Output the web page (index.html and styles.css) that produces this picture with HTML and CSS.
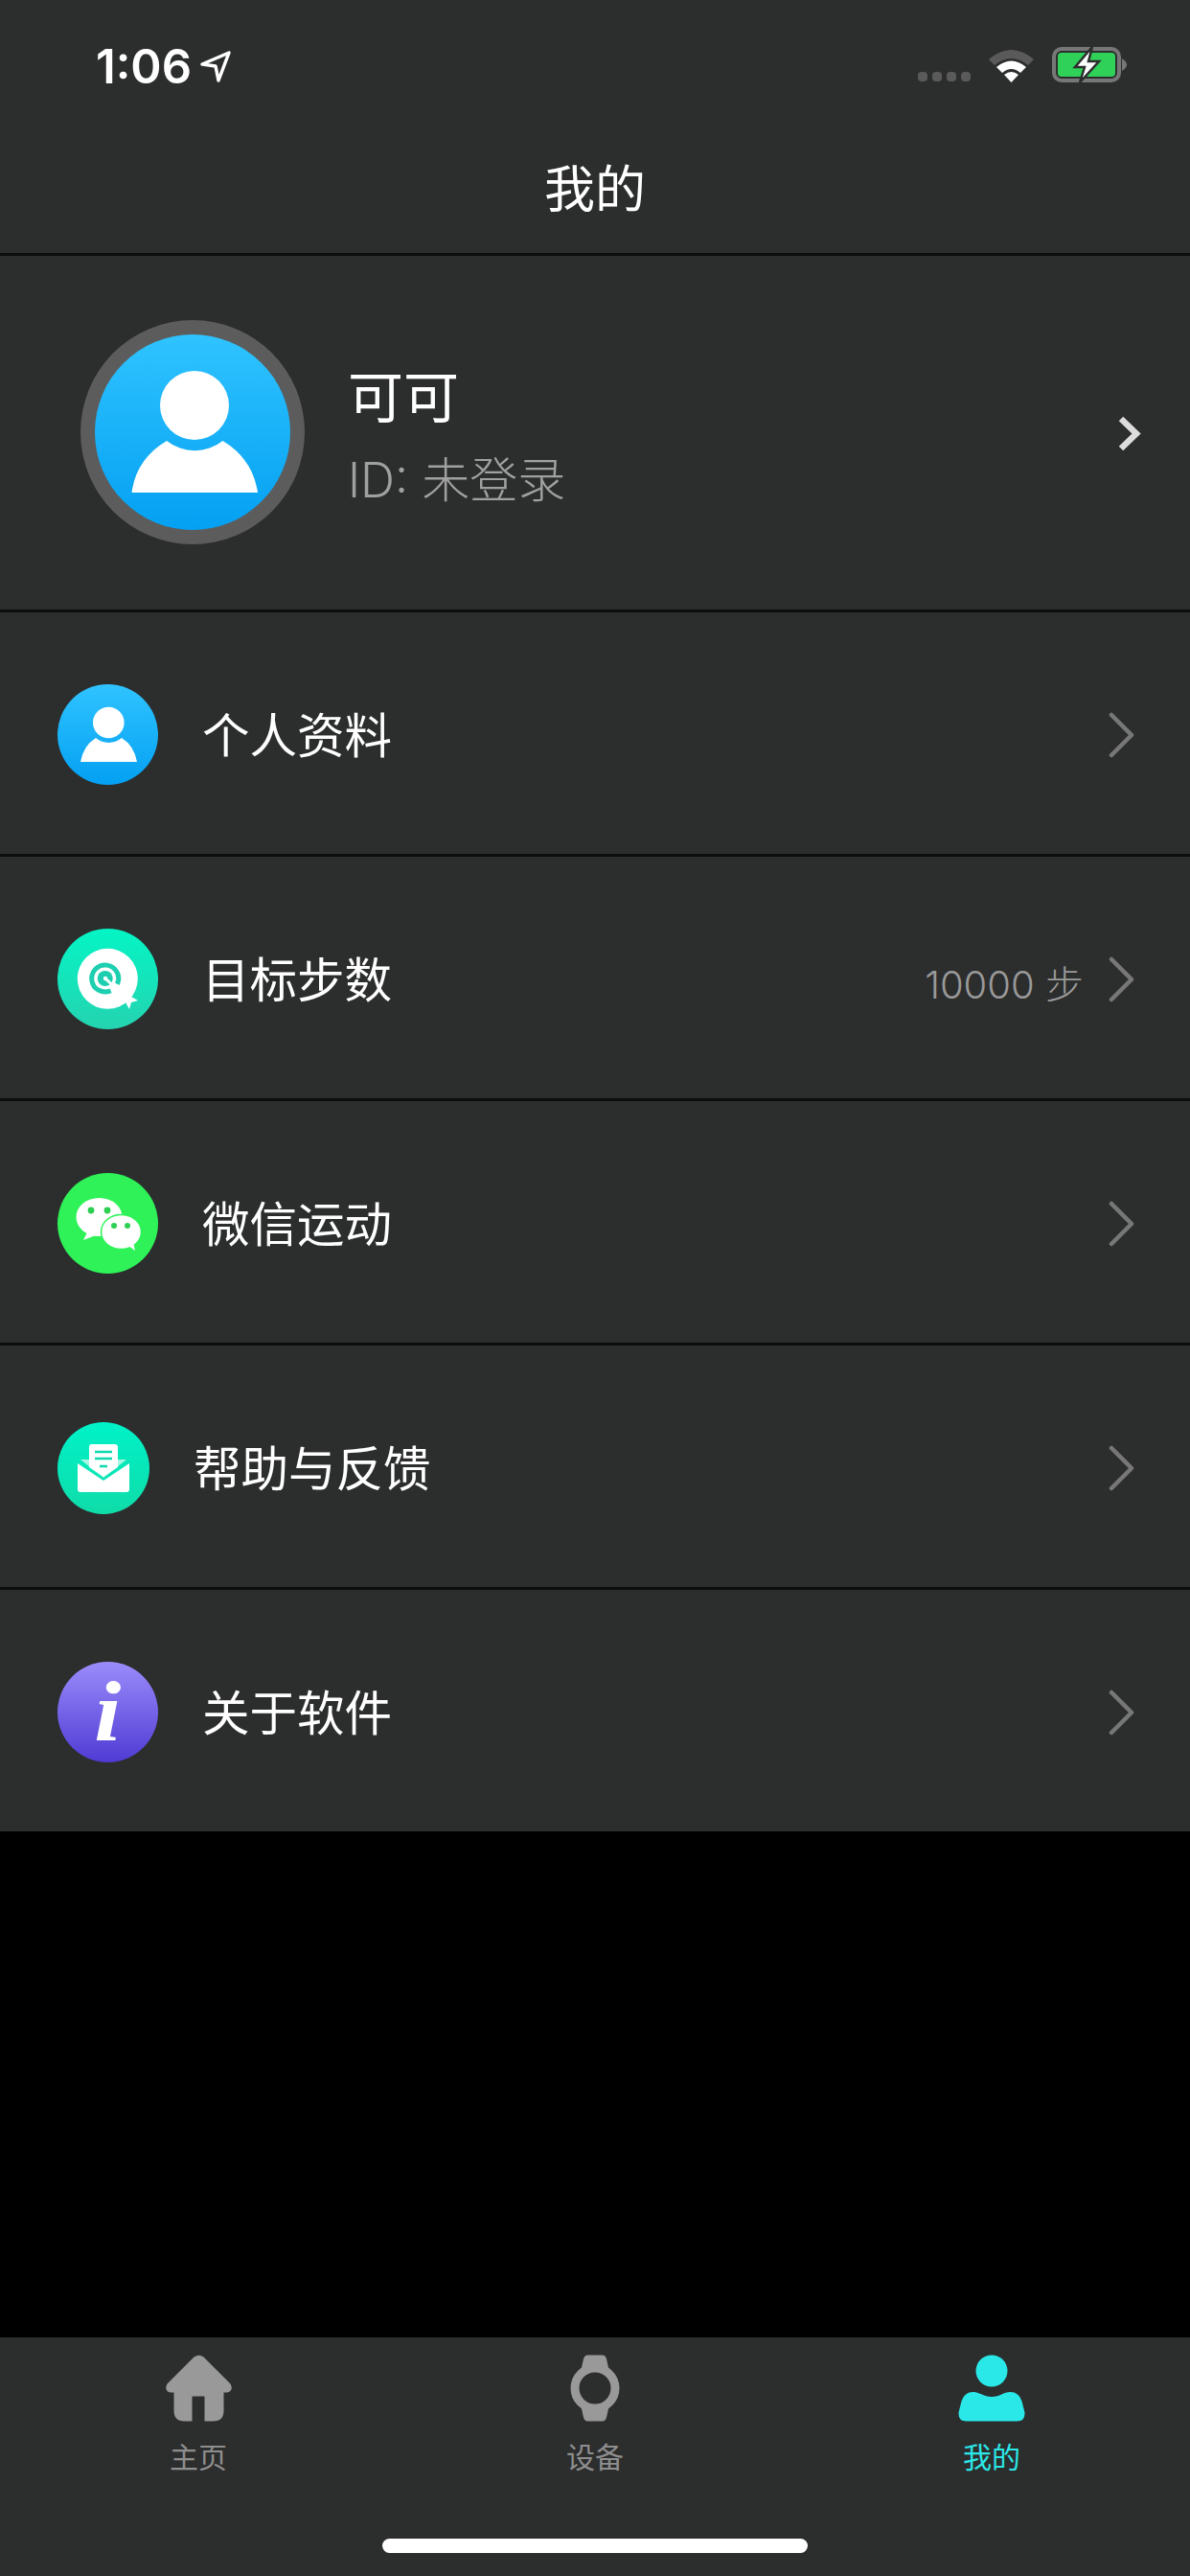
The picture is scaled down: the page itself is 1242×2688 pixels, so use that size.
FILE: index.html
```html
<!DOCTYPE html>
<html lang="zh-CN">
<head>
  <meta charset="UTF-8">
  <meta name="viewport" content="width=device-width, initial-scale=1.0">
  <title>我的</title>
  <link rel="stylesheet" href="styles.css">
</head>
<body>
  <div class="page">
    <!-- Status bar and title -->
    <div class="top">
      <div class="status">
        <div class="status-left">
          <span class="time">1:06</span>
          <svg width="32" height="33" viewBox="0 0 32 33"><path d="M2 14 L30 2 L19 31 L16 16 Z" fill="none" stroke="#fff" stroke-width="3.5" stroke-linejoin="round"/></svg>
        </div>
        <div class="status-right">
          <div class="dots"><i></i><i></i><i></i><i></i></div>
          <svg width="47" height="36" viewBox="0 0 47 36">
            <path d="M0 12 Q23.5 -8 47 12 L41 18 Q23.5 4 6 18 Z" fill="#5a5a5a"/>
            <path d="M8 20 Q23.5 7 39 20 L33 26 Q23.5 18 14 26 Z" fill="#fff"/>
            <path d="M16 28 Q23.5 22 31 28 L23.5 36 Z" fill="#fff"/>
          </svg>
          <svg width="79" height="37" viewBox="0 0 79 37">
            <rect x="2" y="2" width="68" height="33" rx="8" fill="none" stroke="#777" stroke-width="4"/>
            <rect x="6" y="6" width="60" height="25" rx="4" fill="#2fd158"/>
            <path d="M73 12 Q83 18.5 73 25 Z" fill="#777"/>
            <path d="M42 0 L24 21 H34 L29 37 L49 15 H38 Z" fill="#fff" stroke="#2c2d2d" stroke-width="2.5"/>
          </svg>
        </div>
      </div>
      <div class="title">我的</div>
    </div>

    <!-- Profile -->
    <div class="profile">
      <div class="avatar">
        <div class="avatar-inner">
          <svg width="204" height="204" viewBox="0 0 204 204">
            <circle cx="104" cy="74" r="36" fill="#fff"/>
            <path d="M38.5 165 Q43 130 75 111 A47 47 0 0 0 133.5 111 Q165 130 170 165 Z" fill="#fff"/>
          </svg>
        </div>
      </div>
      <div class="profile-text">
        <div class="profile-name">可可</div>
        <div class="profile-id">ID: 未登录</div>
      </div>
      <svg class="profile-arrow" width="27" height="39" viewBox="0 0 27 39"><path d="M5 4 L21 19.5 L5 35" fill="none" stroke="#ddd" stroke-width="6.5"/></svg>
    </div>

    <!-- Menu -->
    <div class="row">
      <div class="icon icon-blue">
        <svg width="105" height="105" viewBox="0 0 105 105">
          <circle cx="53.3" cy="40" r="16.3" fill="#fff"/>
          <path d="M24 81 Q27 64 40 56 A21 21 0 0 0 67 56 Q80 64 83 81 Z" fill="#fff"/>
        </svg>
      </div>
      <span class="row-label">个人资料</span>
      <svg class="arrow" width="27" height="48" viewBox="0 0 27 48"><path d="M3 3 L24 24 L3 45" fill="none" stroke="#777" stroke-width="4.5" stroke-linecap="round" stroke-linejoin="round"/></svg>
    </div>

    <div class="row">
      <div class="icon icon-teal">
        <svg width="105" height="105" viewBox="0 0 105 105">
          <circle cx="52.3" cy="52.3" r="31.5" fill="#fff"/>
          <path d="M68 66 L84 75 L77 77 L75 84 L66 68 Z" fill="#fff"/>
          <path d="M62.4 57.9 A14 14 0 1 0 55.6 64.7" fill="none" stroke="#1dcfb0" stroke-width="5"/>
          <circle cx="49.7" cy="52" r="8" fill="#1dcfb0"/>
          <circle cx="50" cy="52" r="2.2" fill="#fff"/>
          <path d="M50 52 L71 72" stroke="#fff" stroke-width="3"/>
        </svg>
      </div>
      <span class="row-label">目标步数</span>
      <span class="row-value">10000 步</span>
      <svg class="arrow" width="27" height="48" viewBox="0 0 27 48"><path d="M3 3 L24 24 L3 45" fill="none" stroke="#777" stroke-width="4.5" stroke-linecap="round" stroke-linejoin="round"/></svg>
    </div>

    <div class="row">
      <div class="icon icon-green">
        <svg width="105" height="105" viewBox="0 0 105 105">
          <ellipse cx="43.5" cy="46" rx="24" ry="20" fill="#fff"/>
          <path d="M31 62 L27 70 L40 65 Z" fill="#fff"/>
          <circle cx="35" cy="39" r="3.4" fill="#2ccf50"/>
          <circle cx="52" cy="39" r="3.4" fill="#2ccf50"/>
          <ellipse cx="66.5" cy="61.5" rx="21" ry="18" fill="#fff" stroke="#2ef258" stroke-width="1.5"/>
          <path d="M74 76 L81 81 L79 72 Z" fill="#fff"/>
          <circle cx="59" cy="55" r="3" fill="#2ccf50"/>
          <circle cx="73" cy="55" r="3" fill="#2ccf50"/>
        </svg>
      </div>
      <span class="row-label">微信运动</span>
      <svg class="arrow" width="27" height="48" viewBox="0 0 27 48"><path d="M3 3 L24 24 L3 45" fill="none" stroke="#777" stroke-width="4.5" stroke-linecap="round" stroke-linejoin="round"/></svg>
    </div>

    <div class="row">
      <div class="icon icon-mail">
        <svg width="96" height="96" viewBox="0 0 96 96">
          <path d="M24 39 H72 L48 58 Z" fill="#a9f5e2"/>
          <path d="M36 23 H60 Q63 23 63 26 V47 L48 57 L33 47 V26 Q33 23 36 23 Z" fill="#fff"/>
          <path d="M39 31 H57 M39 38 H57 M44 46 H52" stroke="#0fd9b0" stroke-width="2.5"/>
          <path d="M21 43 L48 61 L75 43 V70 Q75 73 72 73 H24 Q21 73 21 70 Z" fill="#fff"/>
        </svg>
      </div>
      <span class="row-label">帮助与反馈</span>
      <svg class="arrow" width="27" height="48" viewBox="0 0 27 48"><path d="M3 3 L24 24 L3 45" fill="none" stroke="#777" stroke-width="4.5" stroke-linecap="round" stroke-linejoin="round"/></svg>
    </div>

    <div class="row">
      <div class="icon icon-purple"><span class="info-letter">i</span></div>
      <span class="row-label">关于软件</span>
      <svg class="arrow" width="27" height="48" viewBox="0 0 27 48"><path d="M3 3 L24 24 L3 45" fill="none" stroke="#777" stroke-width="4.5" stroke-linecap="round" stroke-linejoin="round"/></svg>
    </div>

    <div class="spacer"></div>

    <!-- Tab bar -->
    <div class="tabbar">
      <div class="tabs">
        <div class="tab">
          <svg width="72" height="72" viewBox="-1.5 -1.5 72 72"><path d="M30 2 Q35 -1.5 40 2 L68 30 Q71.5 37 65 39 H61 V58 Q61 69 50 69 H41 V43 H28 V69 H20 Q9 69 9 58 V39 H5 Q-1.5 37 2 30 Z" fill="#999"/></svg>
          <span>主页</span>
        </div>
        <div class="tab">
          <svg width="72" height="72" viewBox="-10.5 -1.5 72 72">
            <circle cx="25.5" cy="34.5" r="21" fill="none" stroke="#999" stroke-width="9"/>
            <path d="M11 15 L13.5 4 Q14.5 0 18 0 H33 Q36.5 0 37.5 4 L40 15 Q25.5 8 11 15 Z" fill="#999"/>
            <path d="M11 54 L13.5 65 Q14.5 69 18 69 H33 Q36.5 69 37.5 65 L40 54 Q25.5 61 11 54 Z" fill="#999"/>
          </svg>
          <span>设备</span>
        </div>
        <div class="tab tab-active">
          <svg width="72" height="72" viewBox="-1.5 -1.5 72 72">
            <circle cx="34.5" cy="16.5" r="16.5" fill="#2ae8e8"/>
            <path d="M3 48 Q6 38.5 15 38.5 C22 38.5 26 43.5 34.5 43.5 C43 43.5 47 38.5 54 38.5 Q63 38.5 66 48 L69 60 Q69.5 69 61 69 H8 Q-0.5 69 0 60 Z" fill="#2ae8e8"/>
          </svg>
          <span>我的</span>
        </div>
      </div>
      <div class="home-bar"></div>
    </div>
  </div>
</body>
</html>
```

FILE: styles.css
```css
body {
  margin: 0;
  background-color: #000;
  font-family: "Noto Sans CJK SC", "Noto Sans", sans-serif;
  color: #fff;
}
.page {
  width: 1242px;
  height: 2688px;
  display: flex;
  flex-direction: column;
  overflow: hidden;
}
.top {
  height: 264px;
  background-color: #2c2d2d;
  border-bottom: 3px solid #0c0d0d;
}
.status {
  display: flex;
  justify-content: space-between;
  align-items: flex-end;
  height: 37px;
  padding: 49px 65px 0 100px;
}
.status-left {
  display: flex;
  align-items: center;
  gap: 9px;
  margin-bottom: -3px;
}
.time {
  font-family: Inter, sans-serif;
  font-size: 49px;
  font-weight: 600;
  line-height: 39px;
}
.status-right {
  display: flex;
  align-items: flex-end;
  gap: 19px;
}
.dots {
  display: flex;
  gap: 5px;
  margin-bottom: 1px;
}
.dots i {
  width: 10px;
  height: 10px;
  border-radius: 4px;
  background-color: #5a5a5a;
}
.title {
  margin-top: 80px;
  font-size: 53px;
  line-height: 56px;
  text-align: center;
}
.profile {
  height: 367px;
  display: flex;
  align-items: center;
  padding: 0 50px 2px 84px;
  background-color: #2c2d2d;
  border-bottom: 3px solid #0c0d0d;
}
.avatar {
  width: 204px;
  height: 204px;
  padding: 15px;
  border-radius: 50%;
  background-color: #5c5c5c;
}
.avatar-inner {
  width: 204px;
  height: 204px;
  border-radius: 50%;
  background: linear-gradient(#2fc3ff, #04a0f2);
}
.avatar-inner svg {
  display: block;
}
.profile-text {
  flex-grow: 1;
  margin-left: 45px;
  padding-top: 6px;
}
.profile-name {
  font-size: 58px;
  line-height: 70px;
}
.profile-id {
  margin-top: 25px;
  font-family: Inter, "Noto Sans CJK SC", sans-serif;
  font-size: 50px;
  font-weight: 300;
  line-height: 60px;
  color: #a0a0a0;
}
.profile-arrow {
  margin-top: 3px;
}
.row {
  height: 249px;
  display: flex;
  align-items: center;
  gap: 46px;
  padding: 3px 58px 0 60px;
  background-color: #2c2d2d;
  border-bottom: 3px solid #0c0d0d;
}
.row:nth-last-of-type(3) {
  border-bottom: none;
}
.icon {
  width: 105px;
  height: 105px;
  flex-shrink: 0;
  display: flex;
  align-items: center;
  justify-content: center;
  border-radius: 50%;
}
.icon svg {
  display: block;
}
.icon-blue {
  background: linear-gradient(#2fc3ff, #04a0f2);
}
.icon-teal {
  background: linear-gradient(#05f5c5, #24d3b0);
}
.icon-green {
  background-color: #2ef258;
}
.icon-mail {
  width: 96px;
  height: 96px;
  background: linear-gradient(#00f2c9, #0fdca8);
}
.icon-purple {
  background: linear-gradient(#9b8cfb, #4f3bd4);
}
.info-letter {
  font-family: "Liberation Serif", serif;
  font-size: 88px;
  font-weight: bold;
  font-style: italic;
  line-height: 105px;
  transform: scaleX(1.15);
}
.row-label {
  flex-grow: 1;
  margin-bottom: 3px;
  font-size: 49.5px;
  line-height: 60px;
}
.row-value {
  margin-top: 6px;
  margin-right: -20px;
  font-family: Inter, "Noto Sans CJK SC", sans-serif;
  font-size: 40px;
  font-weight: 300;
  color: #999;
}
.arrow {
  flex-shrink: 0;
}
.spacer {
  flex-grow: 1;
  background-color: #000;
}
.tabbar {
  height: 249px;
  display: flex;
  flex-direction: column;
  background-color: #2c2d2d;
}
.tabs {
  display: flex;
  padding-top: 17px;
}
.tab {
  flex: 1;
  display: flex;
  flex-direction: column;
  align-items: center;
  font-size: 30px;
  color: #8e8e8e;
}
.tab span {
  margin-top: 14px;
  line-height: 40px;
}
.tab-active {
  color: #2ae8e8;
}
.home-bar {
  width: 444px;
  height: 15px;
  margin: auto auto 24px;
  border-radius: 8px;
  background-color: #fff;
}
```
